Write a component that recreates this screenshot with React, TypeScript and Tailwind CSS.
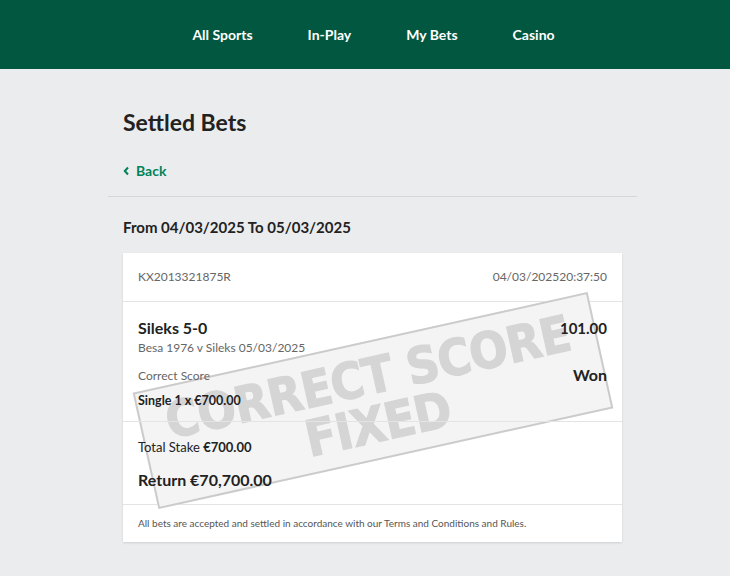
import * as React from "react";

const navItems = ["All Sports", "In-Play", "My Bets", "Casino"];

function Stamp() {
  return (
    <div className="pointer-events-none absolute left-[-233px] top-[39px] flex h-[119px] w-[466px] -rotate-[12.5deg] flex-col items-center justify-center border-2 border-[#cbcbcb] bg-[#f4f4f4] font-['DejaVu_Sans_Condensed','DejaVu_Sans',sans-serif] text-[50px] font-bold leading-[48px] tracking-[-0.5px] text-[#d5d5d5] [-webkit-text-stroke:1.2px_#d5d5d5]">
      <span>CORRECT SCORE</span>
      <span>FIXED</span>
    </div>
  );
}

export default function App() {
  return (
    <div className="min-h-[576px] bg-[#ebecee] font-['Lato',sans-serif] text-[#222]">
      <header className="flex h-[69px] items-center justify-center gap-[55px] bg-[#01573f] pl-[17px] text-[14px] font-bold text-white">
        {navItems.map((item) => (
          <span key={item}>{item}</span>
        ))}
      </header>

      <main className="pl-[15px]">
        <div className="mx-auto w-[529px]">
          <div className="px-[15px] pt-[38px]">
            <h1 className="text-[23px] font-bold leading-[30px]">Settled Bets</h1>
            <a className="mt-[23px] flex items-center gap-[6px] text-[14px] font-bold text-[#00835a]">
              <svg width="7" height="10" viewBox="0 0 7 10" fill="none" stroke="currentColor" strokeWidth="2">
                <path d="M5 1.5 1.8 5 5 8.5" />
              </svg>
              Back
            </a>
          </div>
          <div className="mt-[15px] h-px bg-[#d6d6d6]" />

          <div className="px-[15px]">
            <h2 className="mt-[19px] text-[15px] font-bold leading-[22px]">From 04/03/2025 To 05/03/2025</h2>

            <div className="mt-[15px] bg-white shadow-[0_1px_2px_rgba(0,0,0,0.12)]">
              <div className="flex h-[48px] items-center justify-between px-[15px] text-[12px] text-[#666]">
                <span>KX2013321875R</span>
                <span>04/03/202520:37:50</span>
              </div>
              <div className="h-px bg-[#e4e4e4]" />

              <div className="relative">
                <div className="absolute left-1/2 top-0">
                  <Stamp />
                </div>

                <div className="relative flex justify-between px-[15px] pt-[15px] pb-[11px]">
                  <div>
                    <div className="text-[16px] font-bold leading-[22px]">Sileks 5-0</div>
                    <div className="text-[12px] leading-[18px] text-[#666]">Besa 1976 v Sileks 05/03/2025</div>
                    <div className="mt-[10px] text-[12px] leading-[18px] text-[#666]">Correct Score</div>
                    <div className="mt-[7px] text-[12.5px] font-bold leading-[18px]">Single 1 x €700.00</div>
                  </div>
                  <div className="flex flex-col items-end">
                    <div className="text-[15px] font-bold leading-[22px]">101.00</div>
                    <div className="mt-[25px] text-[16px] font-bold leading-[22px]">Won</div>
                  </div>
                </div>
                <div className="relative h-px bg-[#e4e4e4]" />

                <div className="relative px-[15px] pt-[15px] pb-[13px]">
                  <div className="text-[13px] leading-[20px]">
                    Total Stake <span className="font-bold">€700.00</span>
                  </div>
                  <div className="mt-[12px] text-[16px] font-bold leading-[22px]">Return €70,700.00</div>
                </div>
              </div>
              <div className="h-px bg-[#e4e4e4]" />

              <div className="flex h-[37px] items-center px-[15px] text-[10px] text-[#555]">
                All bets are accepted and settled in accordance with our Terms and Conditions and Rules.
              </div>
            </div>
          </div>
        </div>
      </main>
    </div>
  );
}
